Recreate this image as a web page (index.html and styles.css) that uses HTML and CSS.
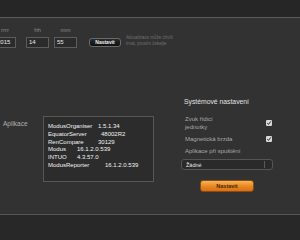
FILE: index.html
```html
<!DOCTYPE html>
<html lang="cs">
<head>
<meta charset="utf-8">
<link rel="stylesheet" href="styles.css">
</head>
<body>
<div class="topbar"></div>
<div class="main">
  <div class="time-row">
    <div class="field year">
      <span class="flabel">rrrr</span>
      <div class="input">2015</div>
    </div>
    <div class="field">
      <span class="flabel">hh</span>
      <div class="input">14</div>
    </div>
    <div class="field">
      <span class="flabel">mm</span>
      <div class="input">55</div>
    </div>
    <button class="btn-dark">Nastavit</button>
    <div class="note">Aktualizace může chvíli<br>trvat, prosím čekejte</div>
  </div>
  <div class="content">
    <div class="apps">
      <span class="apps-label">Aplikace</span>
      <div class="versions">
        <div class="vline"><span class="vname w1">ModusOrganiser</span>1.5.1.34</div>
        <div class="vline"><span class="vname w2">EquatorServer</span>48002R2</div>
        <div class="vline"><span class="vname w3">RenCompare</span>30129</div>
        <div class="vline"><span class="vname w4">Modus</span>16.1.2.0.539</div>
        <div class="vline"><span class="vname w4">INTUO</span>4.3.57.0</div>
        <div class="vline"><span class="vname w5">ModusReporter</span>16.1.2.0.539</div>
      </div>
    </div>
    <div class="settings">
      <div class="heading">Systémové nastavení</div>
      <div class="opt first">
        <span>Zvuk řídicí<br>jednotky</span>
        <span class="check"><svg viewBox="0 0 6 6" width="6" height="6"><path d="M1.3 3.1 L2.5 4.4 L4.8 1.4" fill="none" stroke="#222" stroke-width="0.9"/></svg></span>
      </div>
      <div class="opt">
        <span>Magnetická brzda</span>
        <span class="check"><svg viewBox="0 0 6 6" width="6" height="6"><path d="M1.3 3.1 L2.5 4.4 L4.8 1.4" fill="none" stroke="#222" stroke-width="0.9"/></svg></span>
      </div>
      <div class="opt">
        <span>Aplikace při spuštění</span>
      </div>
      <div class="select">
        <span>Žádné</span>
        <span class="sep"></span>
      </div>
      <button class="btn-orange">Nastavit</button>
    </div>
  </div>
</div>
<div class="footer"></div>
</body>
</html>
```
FILE: styles.css
```css
html, body {
  margin: 0;
  padding: 0;
}
body {
  width: 300px;
  height: 240px;
  overflow: hidden;
  background: #323232;
  font-family: "Liberation Sans", Arial, sans-serif;
  color: #e6e6e6;
}
.topbar {
  height: 17px;
  background: #262626;
  border-bottom: 1px solid #5a5a5a;
}
.main {
  height: 196px;
}
.time-row {
  display: flex;
  align-items: flex-end;
  margin-left: -6px;
  padding-top: 9px;
}
.field {
  display: flex;
  flex-direction: column;
  align-items: center;
  margin-right: 5px;
}
.field.year {
  margin-right: 10px;
}
.flabel {
  font-size: 6px;
  line-height: 7px;
  color: #8a8a8a;
  margin-bottom: 3px;
}
.input {
  width: 19px;
  height: 9px;
  border: 1px solid #5c5c5c;
  background: #2b2b2b;
  font-size: 6px;
  line-height: 9px;
  padding-left: 2px;
  color: #e8e8e8;
  box-sizing: content-box;
}
.year .input {
  width: 18px;
}
.btn-dark {
  margin: 0 0 1px 7px;
  width: 32px;
  height: 9px;
  padding: 0;
  border: 1px solid #6a6a6a;
  border-radius: 3px;
  background: linear-gradient(#2a2a2a, #101010);
  color: #f0f0f0;
  font-family: inherit;
  font-size: 5px;
  font-weight: bold;
  line-height: 7px;
}
.note {
  margin: 0 0 1px 5px;
  font-size: 4.5px;
  line-height: 6px;
  color: #707070;
}
.content {
  display: flex;
  align-items: flex-start;
  margin-top: 49px;
}
.apps {
  display: flex;
  align-items: flex-start;
  margin-top: 19px;
}
.apps-label {
  width: 40px;
  padding-left: 3px;
  margin-top: 4px;
  font-size: 6.5px;
  line-height: 8px;
  color: #b0b0b0;
}
.versions {
  width: 105px;
  height: 58px;
  border: 1px solid #575757;
  background: #2c2c2c;
  padding: 6px 0 0 4px;
  font-size: 6px;
  line-height: 7.8px;
  color: #f2f2f2;
  box-sizing: content-box;
}
.vline {
  white-space: nowrap;
}
.vname {
  display: inline-block;
}
.w1 { width: 50px; }
.w2 { width: 53px; }
.w3 { width: 50px; }
.w4 { width: 29px; }
.w5 { width: 57px; }
.settings {
  width: 92px;
  margin-left: 27px;
  display: flex;
  flex-direction: column;
}
.heading {
  padding-left: 3px;
  font-size: 6.8px;
  line-height: 9px;
  color: #e0e0e0;
}
.opt {
  display: flex;
  align-items: center;
  justify-content: space-between;
  padding-left: 4px;
  font-size: 6px;
  line-height: 8px;
  color: #a8a8a8;
  margin-top: 4px;
}
.opt.first {
  margin-top: 9px;
}
.check {
  width: 6px;
  height: 6px;
  background: #d8d8d8;
  border-radius: 1px;
  margin-right: 1px;
  display: flex;
}
.select {
  margin-top: 4px;
  height: 9px;
  border: 1px solid #555;
  border-radius: 3px;
  background: #2a2a2a;
  display: flex;
  align-items: center;
  justify-content: space-between;
  padding-left: 4px;
  font-size: 5.5px;
  color: #e8e8e8;
}
.sep {
  width: 1px;
  height: 7px;
  background: #5a5a5a;
  margin-right: 7px;
}
.btn-orange {
  align-self: center;
  margin-top: 10px;
  width: 54px;
  height: 12px;
  padding: 0;
  border: 1px solid #8a4a10;
  border-radius: 3px;
  background: linear-gradient(#f7b45a, #e8861f 55%, #d8701a);
  color: #4a2605;
  font-family: inherit;
  font-size: 5.5px;
  font-weight: bold;
  line-height: 10px;
}
.footer {
  height: 25px;
  border-top: 1px solid #575757;
  background: #282828;
}
```
